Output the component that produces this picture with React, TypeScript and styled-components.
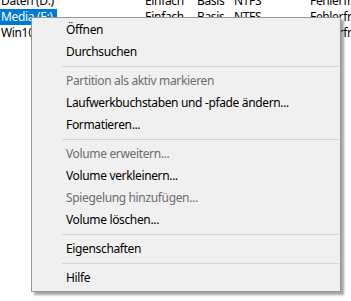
import React from 'react';
import styled, {createGlobalStyle} from 'styled-components';

const GlobalStyle = createGlobalStyle`
  html, body {
    margin: 0;
    padding: 0;
    background: #ffffff;
  }
  body {
    width: 351px;
    height: 301px;
    overflow: hidden;
    font-family: 'Noto Sans', 'Segoe UI', sans-serif;
    font-size: 12px;
    letter-spacing: -0.35px;
  }
`;

const StyledPage = styled.div`
  position: relative;
  width: 351px;
  height: 301px;
  overflow: hidden;
`;

const StyledVolumeTable = styled.div`
  display: flex;
  flex-direction: column;
  margin-top: -7px;
`;

const StyledVolumeRow = styled.div`
  display: grid;
  grid-template-columns: 145px 52px 37px 76px 1fr;
  height: 16px;
  line-height: 16px;
  white-space: nowrap;
  color: #000;
`;

const StyledCell = styled.div`
  overflow: hidden;
`;

const StyledNameCell = styled.div<{selected?: boolean}>`
  justify-self: start;
  padding: 0 4px 0 1px;
  background: ${({selected}) => (selected ? '#0078d7' : 'transparent')};
  color: ${({selected}) => (selected ? '#ffffff' : '#000000')};
`;

const StyledMenu = styled.ul`
  position: absolute;
  top: 17px;
  left: 31px;
  width: 308px;
  margin: 0;
  padding: 1px 0 2px;
  list-style: none;
  background: #f0f0f0;
  border: 1px solid #979797;
  box-shadow: 3px 3px 2px rgba(0, 0, 0, 0.35);
`;

const StyledMenuItem = styled.li<{disabled?: boolean}>`
  height: 22px;
  line-height: 22px;
  padding-left: 34px;
  color: ${({disabled}) => (disabled ? '#6d6d6d' : '#000000')};
  white-space: nowrap;
`;

const StyledSeparator = styled.li`
  height: 7px;
  display: flex;
  align-items: center;
  padding: 0 1px 0 30px;

  &::before {
    content: '';
    flex: 1;
    height: 1px;
    background: #d7d7d7;
  }
`;

const volumes = [
  {name: 'Daten (D:)', layout: 'Einfach', type: 'Basis', fs: 'NTFS', status: 'Fehlerfrei'},
  {name: 'Media (E:)', layout: 'Einfach', type: 'Basis', fs: 'NTFS', status: 'Fehlerfrei', selected: true},
  {name: 'Win10', layout: '', type: '', fs: '', status: 'Fehlerfrei'},
];

type MenuEntry = {label?: string; disabled?: boolean; separator?: boolean};

const menu: MenuEntry[] = [
  {label: 'Öffnen'},
  {label: 'Durchsuchen'},
  {separator: true},
  {label: 'Partition als aktiv markieren', disabled: true},
  {label: 'Laufwerkbuchstaben und -pfade ändern...'},
  {label: 'Formatieren...'},
  {separator: true},
  {label: 'Volume erweitern...', disabled: true},
  {label: 'Volume verkleinern...'},
  {label: 'Spiegelung hinzufügen...', disabled: true},
  {label: 'Volume löschen...'},
  {separator: true},
  {label: 'Eigenschaften'},
  {separator: true},
  {label: 'Hilfe'},
];

const App = () => {
  return (
    <>
      <GlobalStyle />
      <StyledPage>
        <StyledVolumeTable>
          {volumes.map((v) => (
            <StyledVolumeRow key={v.name}>
              <StyledCell>
                <StyledNameCell selected={v.selected}>{v.name}</StyledNameCell>
              </StyledCell>
              <StyledCell>{v.layout}</StyledCell>
              <StyledCell>{v.type}</StyledCell>
              <StyledCell>{v.fs}</StyledCell>
              <StyledCell>{v.status}</StyledCell>
            </StyledVolumeRow>
          ))}
        </StyledVolumeTable>

        <StyledMenu>
          {menu.map((m, i) =>
            m.separator ? (
              <StyledSeparator key={i} />
            ) : (
              <StyledMenuItem key={i} disabled={m.disabled}>
                {m.label}
              </StyledMenuItem>
            )
          )}
        </StyledMenu>
      </StyledPage>
    </>
  );
};

export default App;
